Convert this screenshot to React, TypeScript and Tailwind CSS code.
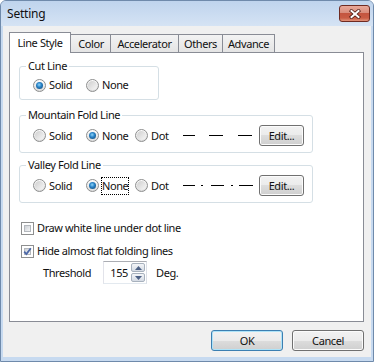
import React from "react";

function Radio({ checked = false }: { checked?: boolean }) {
  return (
    <span className="flex h-[13px] w-[13px] shrink-0 items-center justify-center rounded-full border border-[#8d8e8e] bg-[linear-gradient(180deg,#fdfdfd,#dcdcdc)]">
      {checked ? (
        <span className="h-[7px] w-[7px] rounded-full bg-[radial-gradient(circle_at_45%_40%,#8fd6fb_0%,#2a84c8_40%,#0f416d_100%)]" />
      ) : (
        <span className="h-[9px] w-[9px] rounded-full bg-[linear-gradient(135deg,#cfcfcf,#f7f7f7)]" />
      )}
    </span>
  );
}

interface RadioItemProps {
  label: string;
  checked?: boolean;
  focus?: boolean;
  className?: string;
}

function RadioItem({ label, checked, focus, className }: RadioItemProps) {
  return (
    <div className={`flex shrink-0 items-center gap-[3px] ${className ?? ""}`}>
      <Radio checked={checked} />
      <span className={focus ? "outline-1 outline-dotted outline-black" : ""}>{label}</span>
    </div>
  );
}

function Check({ checked = false }: { checked?: boolean }) {
  return (
    <span className="relative flex h-[13px] w-[13px] shrink-0 border border-[#8e8f8f] bg-white p-[2px]">
      <span className="h-full w-full border border-[#b4b8bd] bg-[linear-gradient(135deg,#cdd1d6,#f4f5f6)]" />
      {checked && (
        <svg width="11" height="11" viewBox="0 0 11 11" className="absolute left-[0px] top-[0px]">
          <path d="M2.2 5.6 L4.4 8 L8.8 2.2" fill="none" stroke="#4d68a8" strokeWidth="1.8" />
        </svg>
      )}
    </span>
  );
}

interface BtnProps {
  children: React.ReactNode;
  isDefault?: boolean;
  className?: string;
}

function Btn({ children, isDefault, className }: BtnProps) {
  return (
    <div
      className={`flex shrink-0 items-center justify-center rounded-[3px] border bg-[linear-gradient(180deg,#f2f2f2_0%,#ebebeb_50%,#dddddd_50%,#cfcfcf_100%)] ${
        isDefault
          ? "border-[#3c7fb1] shadow-[inset_0_0_0_1px_#aee3f8]"
          : "border-[#707070] shadow-[inset_0_0_0_1px_#fbfbfb]"
      } ${className ?? ""}`}
    >
      {children}
    </div>
  );
}

function Group({ title, className, children }: { title: string; className?: string; children: React.ReactNode }) {
  return (
    <div className={`relative ml-[9px] rounded-[3px] border border-[#d5dfe5] ${className ?? ""}`}>
      <span className="absolute left-[6px] top-[-9px] bg-white px-[2px]">{title}</span>
      {children}
    </div>
  );
}

function Dashes({ dotted }: { dotted?: boolean }) {
  return (
    <svg width="70" height="3" className="shrink-0">
      <path
        d={dotted ? "M0 1.5h12M18 1.5h2M28 1.5h13M48 1.5h2M56 1.5h14" : "M0 1.5h12M26 1.5h14M55 1.5h14"}
        stroke="#000"
        strokeWidth="1"
      />
    </svg>
  );
}

function FoldRow({ focusNone, dotted }: { focusNone?: boolean; dotted?: boolean }) {
  return (
    <div className="mt-[9px] flex h-[21px] items-center pl-[13px] pr-[8px]">
      <RadioItem label="Solid" className="w-[53px]" />
      <RadioItem label="None" checked focus={focusNone} className="w-[49px]" />
      <RadioItem label="Dot" className="w-[48px]" />
      <Dashes dotted={dotted} />
      <Btn className="ml-auto h-[21px] w-[45px]">Edit...</Btn>
    </div>
  );
}

export default function App() {
  return (
    <div className="flex h-[362px] w-[374px] flex-col overflow-hidden rounded-t-[6px] border border-[#6f8aab] bg-[#c7daf0] font-['Noto_Sans',sans-serif] text-[11px] leading-[16px] tracking-[-0.4px] text-[#111]">
      {/* title bar */}
      <div className="flex h-[25px] shrink-0 items-start justify-between bg-[linear-gradient(180deg,#bfd4ed,#d5e3f4)] pl-[6px] pr-[3px]">
        <span className="mt-[5px] text-[12px] leading-[16px] tracking-[-0.2px]">Setting</span>
        <div className="mt-[4px] flex h-[17px] w-[31px] items-center justify-center rounded-[3px] border border-[#6f2b22] bg-[linear-gradient(180deg,#e9a899_0%,#d98d7c_45%,#c4553f_50%,#c95c44_80%,#e3937a_100%)]">
          <svg width="12" height="10" viewBox="0 0 12 10">
            <path d="M2.5 2 L9.5 8 M9.5 2 L2.5 8" stroke="#4d1a13" strokeWidth="3.6" strokeLinecap="square" />
            <path d="M2.5 2 L9.5 8 M9.5 2 L2.5 8" stroke="#fff" strokeWidth="2" strokeLinecap="square" />
          </svg>
        </div>
      </div>

      {/* client area */}
      <div className="mx-[2px] mb-[4px] flex flex-1 flex-col bg-[#f0f0f0] pl-[6px] pr-[7px] pt-[6px]">
        {/* tabs */}
        <div className="flex h-[20px] items-end">
          <div className="relative z-10 -mb-px flex h-[21px] w-[62px] items-center justify-center border border-b-0 border-[#898c95] bg-white">
            Line Style
          </div>
          <div className="-ml-[2px] flex h-[18px] w-[42px] items-center justify-center border border-b-0 border-[#898c95] bg-[linear-gradient(180deg,#f3f3f3,#e4e4e4)] pl-[2px]">
            Color
          </div>
          <div className="-ml-px flex h-[18px] w-[69px] items-center justify-center border border-b-0 border-[#898c95] bg-[linear-gradient(180deg,#f3f3f3,#e4e4e4)]">
            Accelerator
          </div>
          <div className="-ml-px flex h-[18px] w-[45px] items-center justify-center border border-b-0 border-[#898c95] bg-[linear-gradient(180deg,#f3f3f3,#e4e4e4)]">
            Others
          </div>
          <div className="-ml-px flex h-[18px] w-[53px] items-center justify-center border border-b-0 border-[#898c95] bg-[linear-gradient(180deg,#f3f3f3,#e4e4e4)]">
            Advance
          </div>
        </div>

        {/* tab page */}
        <div className="flex h-[270px] flex-col border border-[#898c95] bg-white">
          <Group title="Cut Line" className="mt-[13px] h-[34px] w-[140px]">
            <div className="mt-[10px] flex h-[16px] items-center pl-[13px]">
              <RadioItem label="Solid" checked className="w-[53px]" />
              <RadioItem label="None" />
            </div>
          </Group>

          <Group title="Mountain Fold Line" className="mt-[15px] h-[38px] w-[294px]">
            <FoldRow />
          </Group>

          <Group title="Valley Fold Line" className="mt-[12px] h-[38px] w-[294px]">
            <FoldRow focusNone dotted />
          </Group>

          <div className="ml-[11px] mt-[17px] flex h-[16px] items-center gap-[3px]">
            <Check />
            <span>Draw white line under dot line</span>
          </div>
          <div className="ml-[11px] mt-[7px] flex h-[16px] items-center gap-[3px]">
            <Check checked />
            <span>Hide almost flat folding lines</span>
          </div>

          <div className="ml-[33px] mt-[2px] flex h-[23px] items-center">
            <span className="w-[60px]">Threshold</span>
            <div className="flex h-[23px] w-[44px] border border-[#abadb3] border-b-[#e3e9ef] border-l-[#e2e3ea] border-r-[#dbdfe6] bg-white">
              <span className="flex-1 pr-[3px] text-right leading-[21px]">155</span>
              <div className="flex w-[15px] flex-col gap-px py-px pr-px">
                <div className="flex flex-1 items-center justify-center rounded-[2px] border border-[#a7b1bd] bg-[linear-gradient(180deg,#f3f5f8,#d5dbe4)]">
                  <svg width="7" height="4" viewBox="0 0 7 4">
                    <path d="M0 4 L3.5 0 L7 4 Z" fill="#4d6185" />
                  </svg>
                </div>
                <div className="flex flex-1 items-center justify-center rounded-[2px] border border-[#a7b1bd] bg-[linear-gradient(180deg,#f3f5f8,#d5dbe4)]">
                  <svg width="7" height="4" viewBox="0 0 7 4">
                    <path d="M0 0 L3.5 4 L7 0 Z" fill="#4d6185" />
                  </svg>
                </div>
              </div>
            </div>
            <span className="ml-[9px]">Deg.</span>
          </div>
        </div>

        {/* dialog buttons */}
        <div className="mt-[8px] flex justify-end gap-[9px]">
          <Btn isDefault className="h-[21px] w-[72px]">OK</Btn>
          <Btn className="h-[21px] w-[72px]">Cancel</Btn>
        </div>
      </div>
    </div>
  );
}
